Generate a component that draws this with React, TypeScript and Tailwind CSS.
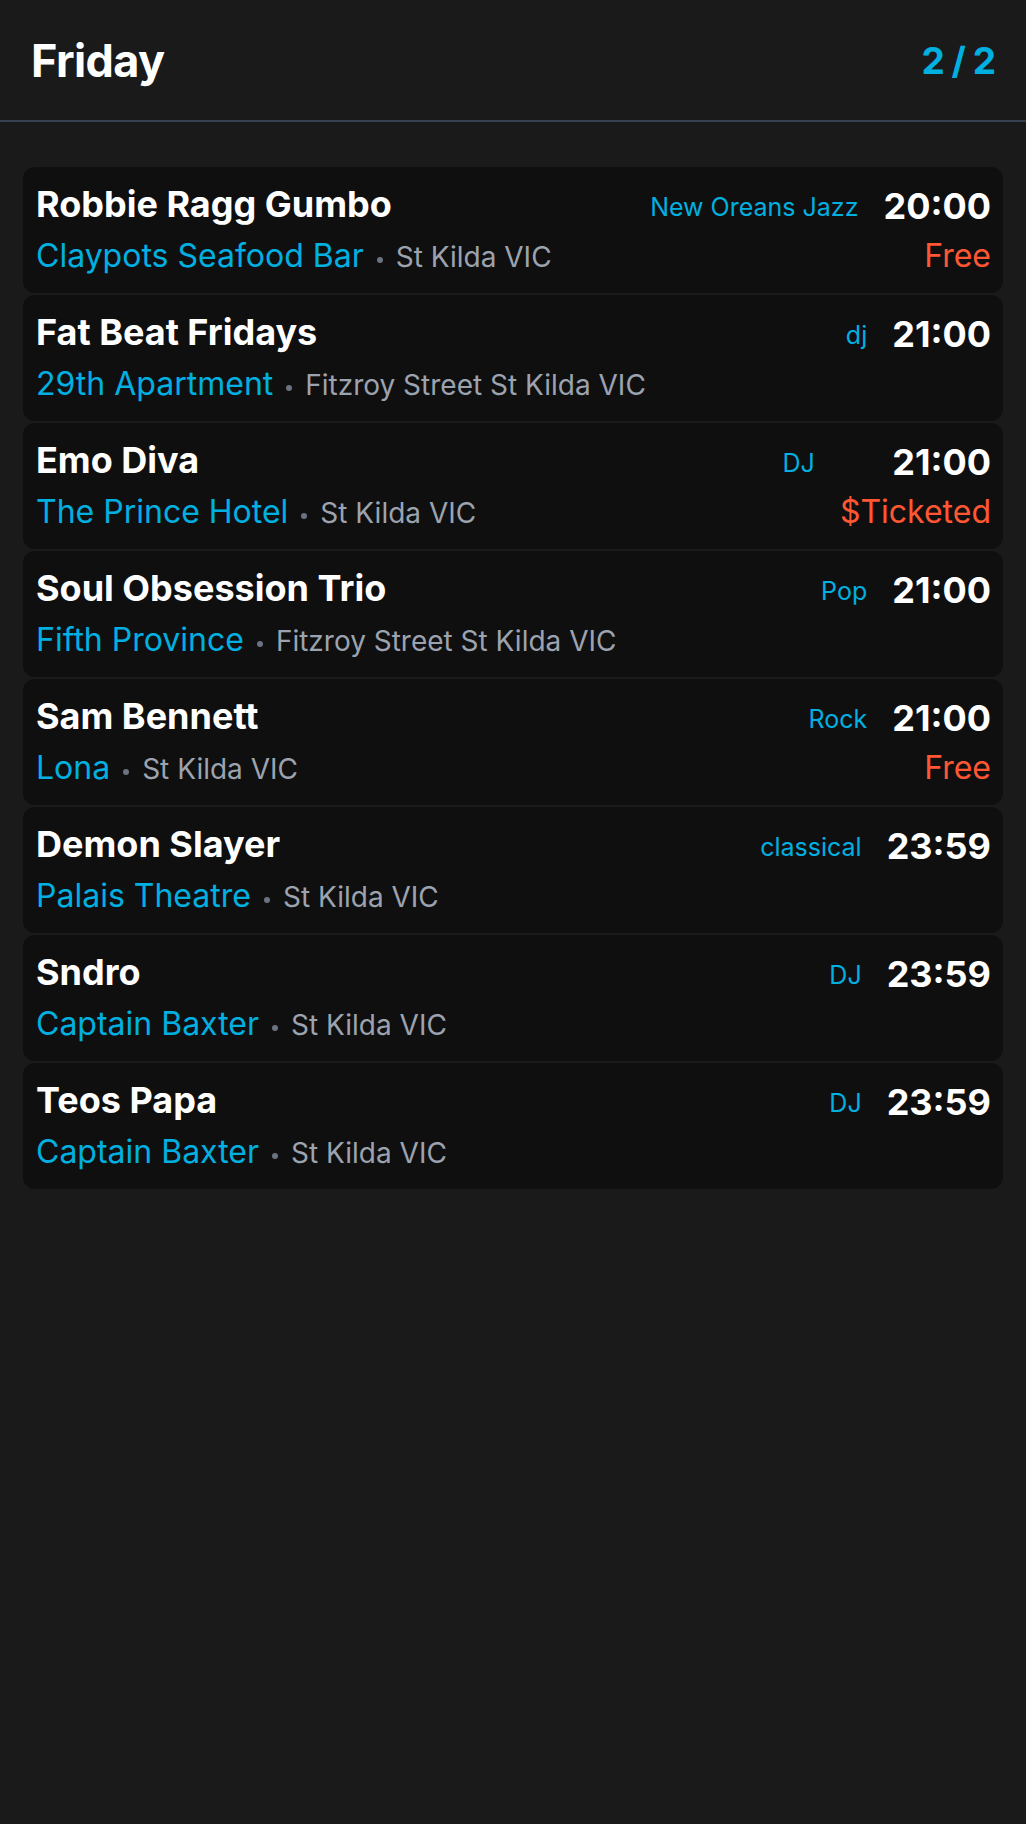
import React from "react";

type Gig = {
  title: string;
  venue: string;
  location: string;
  genre: string;
  time: string;
  price?: string;
};

const gigs: Gig[] = [
  { title: "Robbie Ragg Gumbo", venue: "Claypots Seafood Bar", location: "St Kilda VIC", genre: "New Oreans Jazz", time: "20:00", price: "Free" },
  { title: "Fat Beat Fridays", venue: "29th Apartment", location: "Fitzroy Street St Kilda VIC", genre: "dj", time: "21:00" },
  { title: "Emo Diva", venue: "The Prince Hotel", location: "St Kilda VIC", genre: "DJ", time: "21:00", price: "$Ticketed" },
  { title: "Soul Obsession Trio", venue: "Fifth Province", location: "Fitzroy Street St Kilda VIC", genre: "Pop", time: "21:00" },
  { title: "Sam Bennett", venue: "Lona", location: "St Kilda VIC", genre: "Rock", time: "21:00", price: "Free" },
  { title: "Demon Slayer", venue: "Palais Theatre", location: "St Kilda VIC", genre: "classical", time: "23:59" },
  { title: "Sndro", venue: "Captain Baxter", location: "St Kilda VIC", genre: "DJ", time: "23:59" },
  { title: "Teos Papa", venue: "Captain Baxter", location: "St Kilda VIC", genre: "DJ", time: "23:59" },
];

function Card({ g }: { g: Gig }) {
  return (
    <div className="flex items-start h-[126px] rounded-[12px] bg-[#0f0f0f] pl-[13px] pr-[12px] pt-[15px]">
      <div className="flex-1 min-w-0 flex flex-col">
        <div className="text-[36px] leading-[44px] font-bold text-white whitespace-nowrap">
          {g.title}
        </div>
        <div className="mt-[8px] flex items-baseline whitespace-nowrap leading-[44px]">
          <span className="text-[32px] text-[#00b0e0]">{g.venue}</span>
          <span className="w-[6px] h-[6px] rounded-full bg-[#6b7280] mx-[13px] self-center translate-y-[3px]"></span>
          <span className="text-[28px] text-[#9ca3af]">{g.location}</span>
        </div>
      </div>
      <div className="mt-[3px] mr-[25px] text-[25px] leading-[44px] text-[#00b0e0] whitespace-nowrap">
        {g.genre}
      </div>
      <div className="flex flex-col items-end pt-[2px]">
        <div className="text-[36px] leading-[44px] font-bold text-white whitespace-nowrap">
          {g.time}
        </div>
        {g.price ? (
          <div className="mt-[6px] text-[32px] leading-[44px] text-[#ff5733] whitespace-nowrap">
            {g.price}
          </div>
        ) : null}
      </div>
    </div>
  );
}

export default function App() {
  return (
    <div
      className="min-h-screen w-full bg-[#1a1a1a]"
      style={{ fontFamily: "Inter, 'Noto Sans', 'Liberation Sans', sans-serif" }}
    >
      <header className="h-[122px] flex items-center justify-between pl-[31px] pr-[31px] border-b-2 border-[#374151]">
        <h1 className="text-[45px] font-bold text-white leading-none tracking-[-0.6px]">Friday</h1>
        <div className="text-[37px] font-bold text-[#00b0e0] leading-none tracking-[-1px]">2 / 2</div>
      </header>
      <main className="px-[23px] pt-[45px] flex flex-col gap-[2px]">
        {gigs.map((g, i) => (
          <Card key={i} g={g} />
        ))}
      </main>
    </div>
  );
}
